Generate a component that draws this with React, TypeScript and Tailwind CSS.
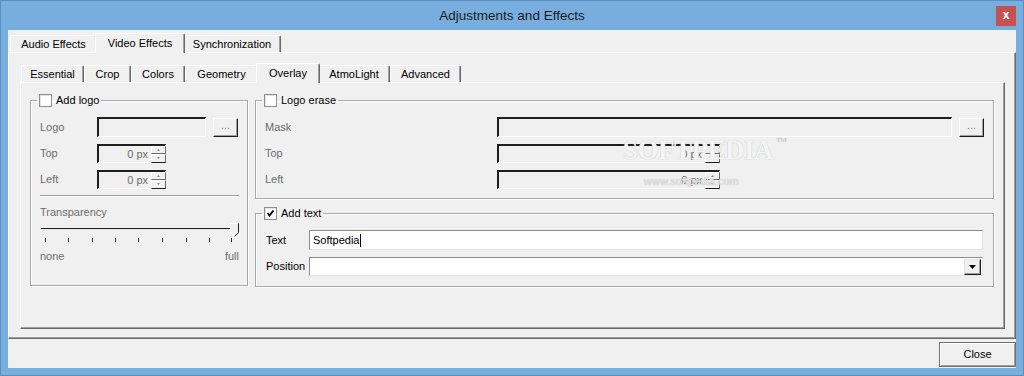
import type { ReactNode } from 'react';

const FONT = { fontFamily: '"Liberation Sans", Arial, sans-serif' };

type Tab = { label: string; width: number };

// classic win32 tab strip; the active tab pokes out 2px each side and sits over the pane border
function TabStrip({ tabs, active, className }: { tabs: Tab[]; active: string; className?: string }) {
  return (
    <div className={`flex items-end h-[19px] ${className ?? ''}`}>
      {tabs.map((t) => {
        const on = t.label === active;
        return (
          <div
            key={t.label}
            style={{ width: on ? t.width + 4 : t.width }}
            className={
              on
                ? 'relative z-10 -mx-[2px] -mb-[1px] h-[20px] bg-[#f0f0f0] border-t border-l border-white border-r border-r-[#696969] shadow-[inset_-1px_0_0_#a0a0a0] rounded-t-[2px] flex items-center justify-center text-[11px] text-black pb-[1px]'
                : 'h-[17px] bg-[#f0f0f0] border-t border-l border-white border-r border-r-[#696969] shadow-[inset_-1px_0_0_#a0a0a0] rounded-t-[2px] flex items-center justify-center text-[11px] text-black pt-[1px]'
            }
          >
            {t.label}
          </div>
        );
      })}
    </div>
  );
}

function Checkbox({ checked }: { checked?: boolean }) {
  return (
    <span className="inline-flex w-[13px] h-[13px] bg-white border border-[#8f8f8f] shadow-[inset_1px_1px_0_#e3e3e3] items-center justify-center">
      {checked && (
        <svg width="9" height="9" viewBox="0 0 9 9">
          <path d="M1.5 4 L3.5 6.5 L7.5 1.5" stroke="#000" strokeWidth="2" fill="none" />
        </svg>
      )}
    </span>
  );
}

function Group({ title, checked, className, children }: { title: string; checked?: boolean; className?: string; children: ReactNode }) {
  return (
    <fieldset className={`border border-[#a8a8a8] shadow-[inset_1px_1px_0_#fff,1px_1px_0_#fff] ${className ?? ''}`}>
      <legend className="ml-[6px] px-[2px] h-[14px] flex items-center gap-[4px] text-[11px] text-black leading-[14px]">
        <Checkbox checked={checked} />
        <span>{title}</span>
      </legend>
      {children}
    </fieldset>
  );
}

function SunkenField({ w, h = 19, children }: { w: number; h?: number; children?: ReactNode }) {
  return (
    <div
      style={{ width: w, height: h }}
      className="relative bg-[#f0f0f0] border-t-2 border-l-2 border-t-[#1e1e1e] border-l-[#1e1e1e] border-b border-r border-b-white border-r-white"
    >
      {children}
    </div>
  );
}

function SpinField({ w }: { w: number }) {
  return (
    <SunkenField w={w}>
      <div className="flex h-full items-center justify-end">
        <span className="text-[11px] text-[#6d6d6d] mr-[3px]">0 px</span>
        <div className="flex flex-col h-[17px] w-[15px] mr-[-1px]">
          <div className="flex-1 border-t border-l border-white border-r border-b border-r-[#696969] border-b-[#696969] flex items-center justify-center">
            <svg width="3" height="2" viewBox="0 0 3 2"><path d="M1.5 0 L3 2 L0 2Z" fill="#8a8a8a" /></svg>
          </div>
          <div className="flex-1 border-t border-l border-white border-r border-b border-r-[#696969] border-b-[#1e1e1e] flex items-center justify-center">
            <svg width="3" height="2" viewBox="0 0 3 2"><path d="M0 0 L3 0 L1.5 2Z" fill="#8a8a8a" /></svg>
          </div>
        </div>
      </div>
    </SunkenField>
  );
}

function DotsButton() {
  return (
    <div className="w-[25px] h-[19px] bg-[#f0f0f0] border-t border-l border-white border-r border-b border-r-[#1e1e1e] border-b-[#1e1e1e] shadow-[inset_-1px_-1px_0_#a0a0a0] flex items-center justify-center text-[11px] text-[#8a8a8a] pb-[3px]">
      ...
    </div>
  );
}

function Label({ w, dim, children }: { w: number; dim?: boolean; children: ReactNode }) {
  return (
    <span style={{ width: w }} className={`shrink-0 text-[11px] ${dim ? 'text-[#6d6d6d]' : 'text-black'}`}>
      {children}
    </span>
  );
}

function Slider() {
  const ticks = [5, 28, 52, 75, 98, 122, 146, 169, 191];
  return (
    <div className="w-[199px]">
      <div className="relative h-[16px]">
        <div className="absolute left-[1px] right-[2px] top-[6px] h-[2px] bg-[#1e1e1e] border-b border-[#e3e3e3]" />
        <svg className="absolute right-[0px] top-[1px]" width="9" height="14" viewBox="0 0 9 14">
          <path d="M0.5 0.5 H8.5 V9.5 L4.5 13.5 L0.5 9.5 Z" fill="#f0f0f0" stroke="#fff" />
          <path d="M8.5 0.5 V9.5 L4.5 13.5" fill="none" stroke="#1e1e1e" />
        </svg>
      </div>
      <div className="relative h-[6px]">
        {ticks.map((x) => (
          <span key={x} style={{ left: x }} className="absolute top-[0px] w-[1px] h-[4px] bg-[#1e1e1e]" />
        ))}
      </div>
      <div className="flex justify-between mt-[6px] text-[11px] text-[#6d6d6d] leading-[13px]">
        <span>none</span>
        <span>full</span>
      </div>
    </div>
  );
}

export default function App() {
  const outerTabs: Tab[] = [
    { label: 'Audio Effects', width: 87 },
    { label: 'Video Effects', width: 86 },
    { label: 'Synchronization', width: 98 },
  ];
  const innerTabs: Tab[] = [
    { label: 'Essential', width: 63 },
    { label: 'Crop', width: 47 },
    { label: 'Colors', width: 54 },
    { label: 'Geometry', width: 73 },
    { label: 'Overlay', width: 60 },
    { label: 'AtmoLight', width: 72 },
    { label: 'Advanced', width: 71 },
  ];

  return (
    <div style={FONT} className="relative w-[1024px] h-[376px] bg-[#78aedd] border border-[#5a8ec1] flex flex-col overflow-hidden">
      {/* title bar */}
      <div className="relative h-[29px] shrink-0 flex items-center justify-center">
        <span className="text-[13.5px] text-[#1b1b1b] mt-[2px]">Adjustments and Effects</span>
        <div className="absolute right-[7px] top-[5px] w-[20px] h-[20px] bg-[#c75050] flex items-center justify-center text-white text-[12px] font-bold leading-none pb-[2px]">
          x
        </div>
      </div>

      {/* client area */}
      <div className="mx-[7px] mb-[7px] flex-1 bg-[#f0f0f0] flex flex-col pt-[3px]">
        <TabStrip tabs={outerTabs} active="Video Effects" className="pl-[2px]" />
        <div className="h-[287px] shrink-0 flex flex-col border-t border-l border-white border-r border-b border-r-[#696969] border-b-[#696969] shadow-[inset_-1px_-1px_0_#a0a0a0] pl-[11px] pr-[10px] pt-[10px] pb-[9px]">
          <TabStrip tabs={innerTabs} active="Overlay" className="pl-[1px]" />
          <div className="flex-1 flex gap-[7px] border-t border-l border-white border-r border-b border-r-[#696969] border-b-[#696969] shadow-[inset_-1px_-1px_0_#a0a0a0] pl-[9px] pt-[10px]">
            {/* add logo */}
            <Group title="Add logo" className="w-[218px] h-[193px] shrink-0">
              <div className="pl-[9px] pt-[10px] flex flex-col">
                <div className="flex items-center">
                  <Label w={57} dim>Logo</Label>
                  <SunkenField w={109} h={20} />
                  <div className="ml-[7px]"><DotsButton /></div>
                </div>
                <div className="flex items-center mt-[7px]">
                  <Label w={57} dim>Top</Label>
                  <SpinField w={69} />
                </div>
                <div className="flex items-center mt-[7px]">
                  <Label w={57} dim>Left</Label>
                  <SpinField w={69} />
                </div>
                <div className="w-[199px] h-[2px] mt-[6px] border-t border-[#a0a0a0] border-b border-b-white" />
                <div className="text-[11px] text-[#6d6d6d] leading-[14px] mt-[8px]">Transparency</div>
                <div className="mt-[3px]"><Slider /></div>
              </div>
            </Group>

            <div className="w-[739px] flex flex-col gap-[7px]">
              {/* logo erase */}
              <Group title="Logo erase" className="h-[106px]">
                <div className="pl-[9px] pt-[10px] flex flex-col">
                  <div className="flex items-center">
                    <Label w={232} dim>Mask</Label>
                    <SunkenField w={455} h={20} />
                    <div className="ml-[7px]"><DotsButton /></div>
                  </div>
                  <div className="flex items-center mt-[7px]">
                    <Label w={232} dim>Top</Label>
                    <SpinField w={223} />
                  </div>
                  <div className="flex items-center mt-[7px]">
                    <Label w={232} dim>Left</Label>
                    <SpinField w={223} />
                  </div>
                </div>
              </Group>

              {/* add text */}
              <Group title="Add text" checked className="h-[81px]">
                <div className="pl-[10px] pt-[10px] flex flex-col">
                  <div className="flex items-center">
                    <Label w={43}>Text</Label>
                    <div className="w-[674px] h-[20px] bg-white border-t border-l border-[#8c8c8c] border-b border-r border-b-[#e3e3e3] border-r-[#e3e3e3] flex items-center pl-[3px] text-[11px] text-black">
                      Softpedia<span className="w-[1px] h-[13px] bg-black ml-[1px]" />
                    </div>
                  </div>
                  <div className="flex items-center mt-[7px]">
                    <Label w={43}>Position</Label>
                    <div className="w-[674px] h-[19px] bg-white border-t border-l border-[#8c8c8c] border-b border-r border-b-[#e3e3e3] border-r-[#e3e3e3] flex items-center justify-end pr-[1px]">
                      <div className="w-[17px] h-[16px] bg-[#f0f0f0] border-t border-l border-[#e3e3e3] border-r border-b border-r-[#1e1e1e] border-b-[#1e1e1e] shadow-[inset_-1px_-1px_0_#a0a0a0] flex items-center justify-center">
                        <svg width="7" height="4" viewBox="0 0 7 4"><path d="M0 0 H7 L3.5 4Z" fill="#000" /></svg>
                      </div>
                    </div>
                  </div>
                </div>
              </Group>
            </div>
          </div>
        </div>

        {/* bottom button row */}
        <div className="flex-1 flex justify-end items-end">
          <div className="w-[77px] h-[25px] mb-[1px] bg-[#f0f0f0] border border-[#707070] shadow-[inset_1px_1px_0_#fff,inset_-1px_-1px_0_#a0a0a0] flex items-center justify-center text-[11px] text-black">
            Close
          </div>
        </div>
      </div>

      {/* softpedia watermark */}
      <div
        className="absolute left-[622px] top-[136px] text-[27px] font-bold text-[#f4f4f4] tracking-[-0.5px] leading-none [text-shadow:0_0_1px_#b8b8b8]"
        style={{ fontFamily: '"Liberation Serif", serif' }}
      >
        SOFTPEDIA<span className="text-[7px] align-top ml-[3px] text-[#c8c8c8] [text-shadow:none]">TM</span>
      </div>
      <div className="absolute left-[643px] top-[175px] text-[11px] text-[#e6e6e6] [text-shadow:0_0_1px_#a8a8a8] leading-none">
        www.softpedia.com
      </div>
    </div>
  );
}
